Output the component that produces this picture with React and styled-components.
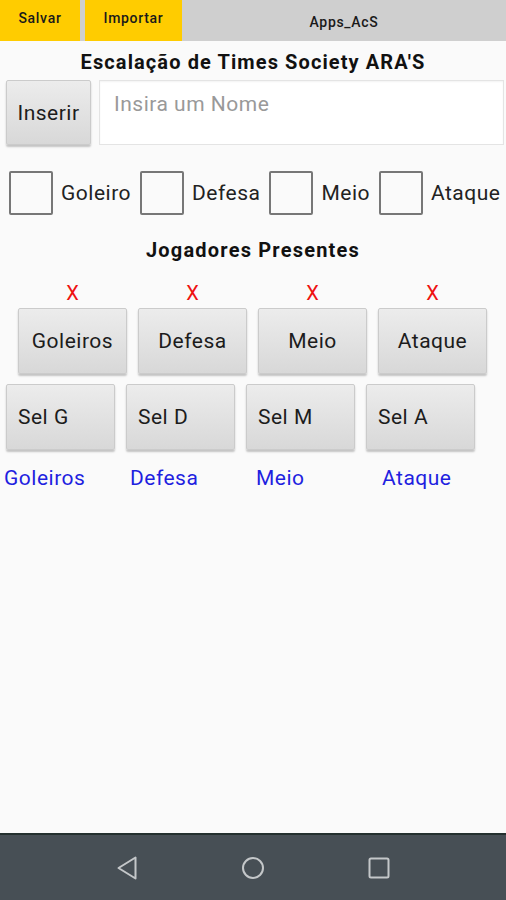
import React from "react";
import styled, { createGlobalStyle } from "styled-components";

const GlobalStyle = createGlobalStyle`
  html, body {
    margin: 0;
    padding: 0;
    background: #fafafa;
  }
  body {
    font-family: Roboto, "Noto Sans", Arial, sans-serif;
  }
`;

const Screen = styled.div`
  width: 506px;
  height: 900px;
  display: flex;
  flex-direction: column;
  background: #fafafa;
  overflow: hidden;
`;

const TopBar = styled.div`
  height: 41px;
  display: flex;
  background: #cfcfcf;
  flex-shrink: 0;
`;

const TabButton = styled.div`
  width: ${(p) => p.w}px;
  margin-right: ${(p) => p.gap || 0}px;
  background: #ffcc00;
  display: flex;
  align-items: center;
  justify-content: center;
  font-size: 14px;
  letter-spacing: 0.7px;
  font-weight: 500;
  color: #1a1a1a;
  padding-bottom: 6px;
  box-sizing: border-box;
`;

const AppName = styled.div`
  flex: 1;
  display: flex;
  align-items: center;
  justify-content: center;
  font-size: 14px;
  letter-spacing: 0.7px;
  font-weight: 500;
  color: #1a1a1a;
  padding-top: 2px;
`;

const Main = styled.div`
  flex: 1;
  display: flex;
  flex-direction: column;
`;

const Heading = styled.div`
  text-align: center;
  font-size: 20px;
  font-weight: 700;
  letter-spacing: ${(p) => p.spacing}px;
  color: #111;
  line-height: 22px;
  margin-top: ${(p) => p.top}px;
`;

const InputRow = styled.div`
  display: flex;
  gap: 8px;
  padding: 0 2px 0 6px;
  margin-top: 7px;
  height: 65px;
`;

const GreyButton = styled.div`
  width: ${(p) => p.w || 109}px;
  height: ${(p) => p.h || 66}px;
  box-sizing: border-box;
  background: linear-gradient(#ececec, #d8d8d8);
  border: 1px solid #cbcbcb;
  border-radius: 2px;
  box-shadow: 0 2px 2px rgba(0, 0, 0, 0.22);
  display: flex;
  align-items: center;
  justify-content: ${(p) => (p.left ? "flex-start" : "center")};
  padding-left: ${(p) => (p.left ? "11px" : "0")};
  font-size: 21px;
  letter-spacing: 0.5px;
  color: #1c1c1c;
  flex-shrink: 0;
`;

const NameInput = styled.div`
  flex: 1;
  box-sizing: border-box;
  background: #fff;
  border: 1px solid #e4e4e4;
  box-shadow: inset 0 1px 2px rgba(0, 0, 0, 0.05);
  padding: 11px 14px;
  font-size: 21px;
  letter-spacing: 0.5px;
  color: #999;
`;

const CheckRow = styled.div`
  display: flex;
  align-items: center;
  padding-left: 9px;
  margin-top: 26px;
  height: 44px;
`;

const CheckItem = styled.div`
  display: flex;
  align-items: center;
  gap: 8px;
  margin-right: 9px;
  font-size: 21px;
  letter-spacing: 0.5px;
  color: #222;
`;

const Box = styled.div`
  width: 44px;
  height: 44px;
  box-sizing: border-box;
  border: 2px solid #777;
  border-radius: 2px;
  background: #fafafa;
`;

const Grid = styled.div`
  display: grid;
  grid-template-columns: repeat(4, ${(p) => p.col}px);
  column-gap: ${(p) => p.gap}px;
  padding-left: ${(p) => p.left}px;
  margin-top: ${(p) => p.top}px;
`;

const Mark = styled.div`
  text-align: center;
  color: #ee1111;
  font-size: 20px;
  line-height: 22px;
`;

const BlueLabel = styled.div`
  color: #1f1fe0;
  font-size: 21px;
  letter-spacing: 0.5px;
  line-height: 24px;
`;

const NavBar = styled.div`
  height: 65px;
  flex-shrink: 0;
  background: #474f55;
  border-top: 2px solid #24302f;
  display: flex;
  align-items: center;
  justify-content: center;
  gap: 102px;
`;

const NavIcon = styled.svg`
  width: 24px;
  height: 24px;
  display: block;
`;

const positions = ["Goleiros", "Defesa", "Meio", "Ataque"];
const checks = ["Goleiro", "Defesa", "Meio", "Ataque"];
const sels = ["Sel G", "Sel D", "Sel M", "Sel A"];

export default function App() {
  return (
    <Screen>
      <GlobalStyle />
      <TopBar>
        <TabButton w={80} gap={5}>Salvar</TabButton>
        <TabButton w={97}>Importar</TabButton>
        <AppName>Apps_AcS</AppName>
      </TopBar>
      <Main>
        <Heading top={10} spacing={1.1}>
          Escalação de Times Society ARA'S
        </Heading>
        <InputRow>
          <GreyButton w={85} h={65}>Inserir</GreyButton>
          <NameInput>Insira um Nome</NameInput>
        </InputRow>
        <CheckRow>
          {checks.map((c) => (
            <CheckItem key={c}>
              <Box />
              {c}
            </CheckItem>
          ))}
        </CheckRow>
        <Heading top={24} spacing={1.2}>
          Jogadores Presentes
        </Heading>
        <Grid col={109} gap={11} left={18} top={21}>
          {positions.map((p) => (
            <Mark key={p}>X</Mark>
          ))}
        </Grid>
        <Grid col={109} gap={11} left={18} top={4}>
          {positions.map((p) => (
            <GreyButton key={p}>{p}</GreyButton>
          ))}
        </Grid>
        <Grid col={109} gap={11} left={6} top={10}>
          {sels.map((s) => (
            <GreyButton key={s} left>
              {s}
            </GreyButton>
          ))}
        </Grid>
        <Grid col={126} gap={0} left={4} top={16}>
          {positions.map((p) => (
            <BlueLabel key={p}>{p}</BlueLabel>
          ))}
        </Grid>
      </Main>
      <NavBar>
        <NavIcon viewBox="0 0 24 24">
          <path
            d="M20.5 1.5 L20.5 22.5 L3.5 12 Z"
            fill="none"
            stroke="#c4c7c9"
            strokeWidth="2"
            strokeLinejoin="round"
          />
        </NavIcon>
        <NavIcon viewBox="0 0 24 24">
          <circle cx="12" cy="12" r="10" fill="none" stroke="#c4c7c9" strokeWidth="2" />
        </NavIcon>
        <NavIcon viewBox="0 0 24 24">
          <rect
            x="2.5"
            y="2.5"
            width="19"
            height="19"
            rx="1.5"
            fill="none"
            stroke="#c4c7c9"
            strokeWidth="2"
          />
        </NavIcon>
      </NavBar>
    </Screen>
  );
}
